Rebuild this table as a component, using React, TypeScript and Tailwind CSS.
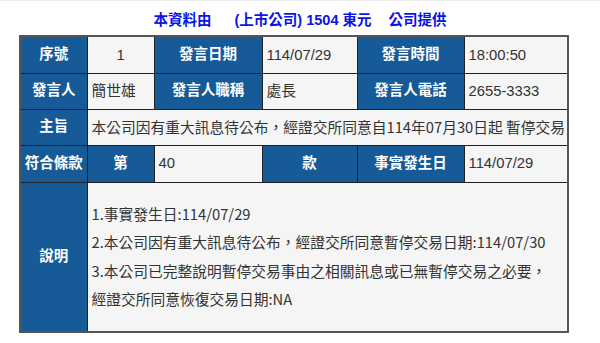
import React from "react";

const hd =
  "bg-[#165a97] text-white font-bold text-center text-[14.5px] border border-[#222] p-0";
const dc =
  "bg-[#f5f5f5] text-[#333] text-[14.8px] border border-[#222] px-[4px] py-0";

export default function App() {
  return (
    <div className="w-[600px] h-[343px] bg-white border-t border-[#eeeeee] overflow-hidden">
      <div
        className="flex justify-center font-bold text-[#0a14e6] text-[14.5px] leading-[20px] pt-[9px] h-[34px] whitespace-pre"
        style={{ fontFamily: '"Liberation Sans", "Noto Sans CJK TC", sans-serif' }}
      >
        <span>本資料由</span>
        <span className="ml-[23px]">(上市公司) 1504 東元</span>
        <span className="ml-[17px]">公司提供</span>
      </div>
      <table
        className="ml-[19px] w-[548px] border-collapse border-2 border-[#555] table-fixed"
        style={{ fontFamily: '"Liberation Sans", "Noto Sans CJK TC", sans-serif' }}
      >
        <colgroup>
          <col className="w-[67px]" />
          <col className="w-[67px]" />
          <col className="w-[108px]" />
          <col className="w-[95px]" />
          <col className="w-[107px]" />
          <col className="w-[104px]" />
        </colgroup>
        <tbody>
          <tr className="h-[37px]">
            <td className={hd}>序號</td>
            <td className={dc + " text-center"}>1</td>
            <td className={hd}>發言日期</td>
            <td className={dc}>114/07/29</td>
            <td className={hd}>發言時間</td>
            <td className={dc}>18:00:50</td>
          </tr>
          <tr className="h-[36px]">
            <td className={hd}>發言人</td>
            <td className={dc + " px-[3px]"}>簡世雄</td>
            <td className={hd}>發言人職稱</td>
            <td className={dc}>處長</td>
            <td className={hd}>發言人電話</td>
            <td className={dc}>2655-3333</td>
          </tr>
          <tr className="h-[36px]">
            <td className={hd}>主旨</td>
            <td
              colSpan={5}
              className={dc + " px-[3px] whitespace-nowrap"}
              style={{ fontFamily: '"Noto Sans CJK TC", sans-serif', fontSize: "14.75px" }}
            >
              本公司因有重大訊息待公布，經證交所同意自114年07月30日起 暫停交易
            </td>
          </tr>
          <tr className="h-[37px]">
            <td className={hd + " whitespace-nowrap"}>符合條款</td>
            <td className={hd}>第</td>
            <td className={dc}>40</td>
            <td className={hd}>款</td>
            <td className={hd}>事實發生日</td>
            <td className={dc}>114/07/29</td>
          </tr>
          <tr className="h-[150px]">
            <td className={hd}>說明</td>
            <td
              colSpan={5}
              className={dc + " px-[3px] leading-[28.33px] whitespace-nowrap"}
              style={{ fontFamily: '"Noto Sans CJK TC", sans-serif', fontSize: "14.75px" }}
            >
              <div>1.事實發生日:114/07/29</div>
              <div>2.本公司因有重大訊息待公布，經證交所同意暫停交易日期:114/07/30</div>
              <div>3.本公司已完整說明暫停交易事由之相關訊息或已無暫停交易之必要，</div>
              <div>經證交所同意恢復交易日期:NA</div>
            </td>
          </tr>
        </tbody>
      </table>
    </div>
  );
}
